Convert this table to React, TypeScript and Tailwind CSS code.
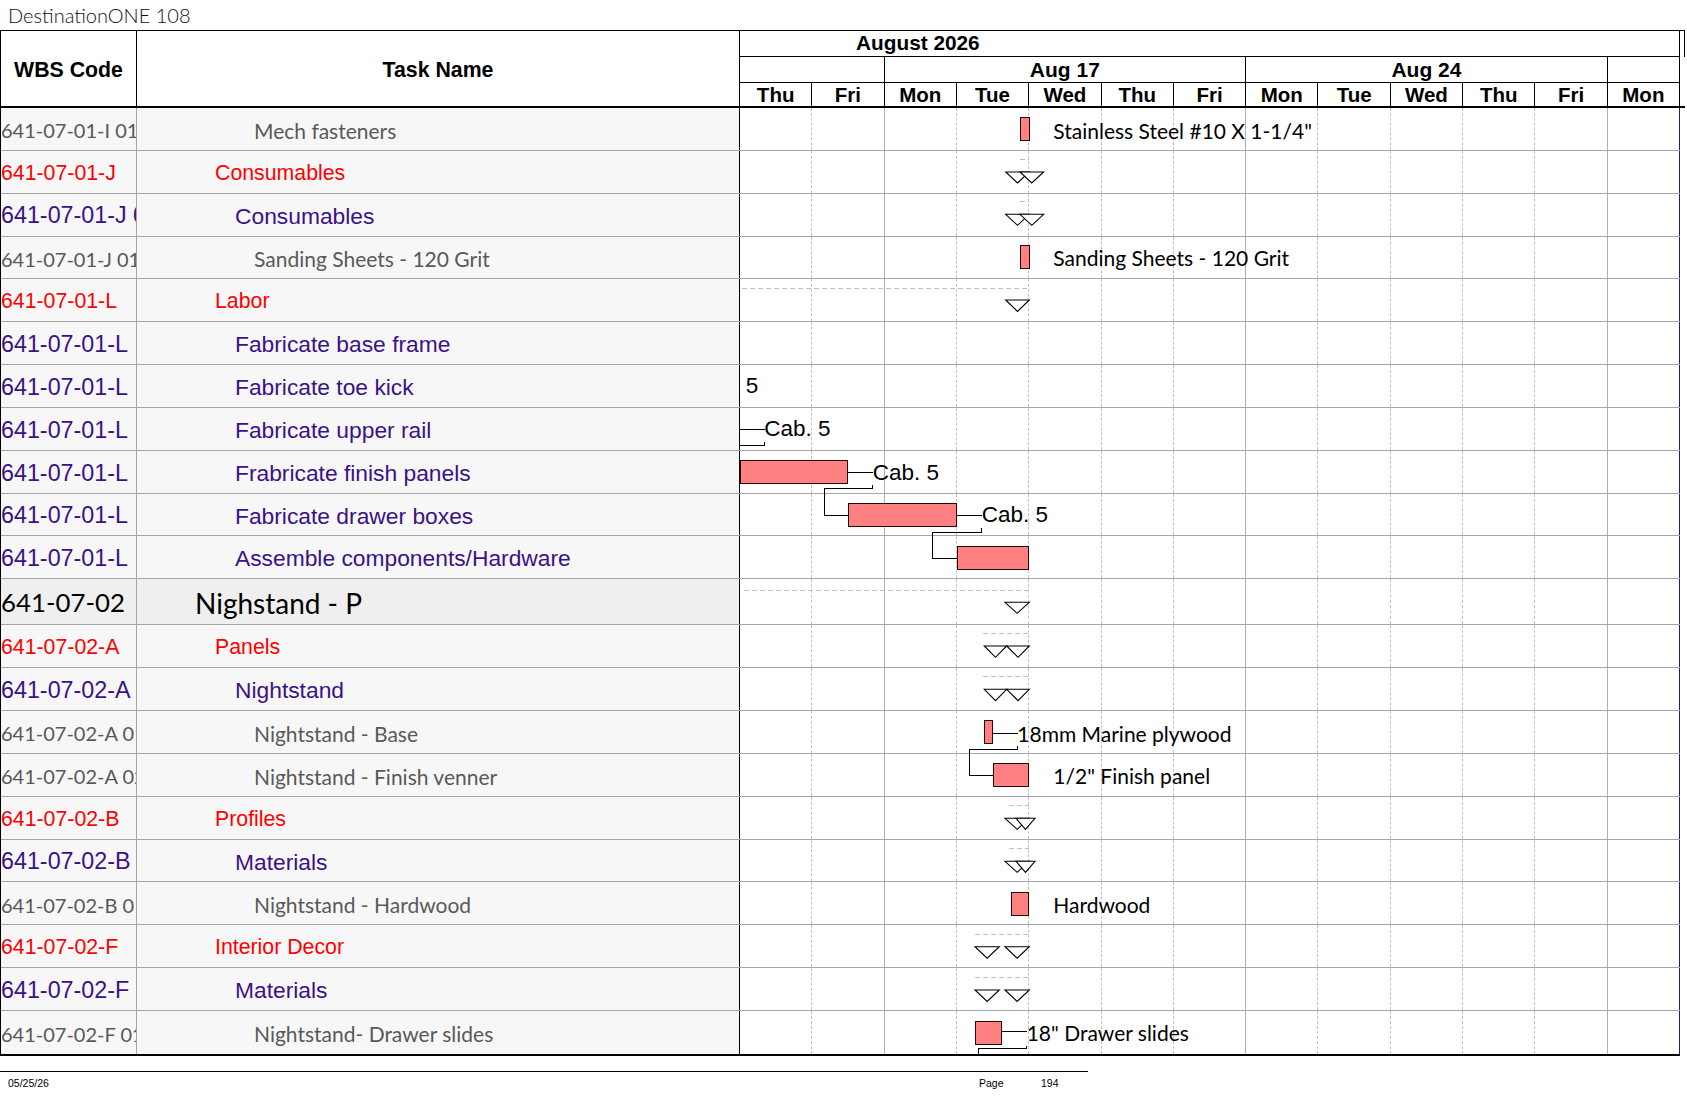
import React from "react";

type Kind = "gray" | "red" | "purple" | "big";
interface Row {
  wbs: string;
  name: string;
  kind: Kind;
}

const LATO = "font-['Lato','Noto_Sans',sans-serif]";
const ARIAL = "font-['Liberation_Sans',Arial,sans-serif]";

const rows: Row[] = [
  { wbs: "641-07-01-I 01", name: "Mech fasteners", kind: "gray" },
  { wbs: "641-07-01-J", name: "Consumables", kind: "red" },
  { wbs: "641-07-01-J 01", name: "Consumables", kind: "purple" },
  { wbs: "641-07-01-J 01", name: "Sanding Sheets - 120 Grit", kind: "gray" },
  { wbs: "641-07-01-L", name: "Labor", kind: "red" },
  { wbs: "641-07-01-L", name: "Fabricate base frame", kind: "purple" },
  { wbs: "641-07-01-L", name: "Fabricate toe kick", kind: "purple" },
  { wbs: "641-07-01-L", name: "Fabricate upper rail", kind: "purple" },
  { wbs: "641-07-01-L", name: "Frabricate finish panels", kind: "purple" },
  { wbs: "641-07-01-L", name: "Fabricate drawer boxes", kind: "purple" },
  { wbs: "641-07-01-L", name: "Assemble components/Hardware", kind: "purple" },
  { wbs: "641-07-02", name: "Nighstand - P", kind: "big" },
  { wbs: "641-07-02-A", name: "Panels", kind: "red" },
  { wbs: "641-07-02-A", name: "Nightstand", kind: "purple" },
  { wbs: "641-07-02-A 01", name: "Nightstand - Base", kind: "gray" },
  { wbs: "641-07-02-A 02", name: "Nightstand - Finish venner", kind: "gray" },
  { wbs: "641-07-02-B", name: "Profiles", kind: "red" },
  { wbs: "641-07-02-B", name: "Materials", kind: "purple" },
  { wbs: "641-07-02-B 01", name: "Nightstand - Hardwood", kind: "gray" },
  { wbs: "641-07-02-F", name: "Interior Decor", kind: "red" },
  { wbs: "641-07-02-F", name: "Materials", kind: "purple" },
  { wbs: "641-07-02-F 01", name: "Nightstand- Drawer slides", kind: "gray" },
];

const days = ["Thu", "Fri", "Mon", "Tue", "Wed", "Thu", "Fri", "Mon", "Tue", "Wed", "Thu", "Fri", "Mon"];

const wbsClass: Record<Kind, string> = {
  gray: `${LATO} text-[20px] text-[#595959]`,
  red: `${ARIAL} text-[21.3px] text-[#ff0000]`,
  purple: `${ARIAL} text-[23.3px] text-[#3a1288]`,
  big: `${LATO} text-[25.8px] text-black`,
};

const nameClass: Record<Kind, string> = {
  gray: `${LATO} text-[21px] text-[#595959] pl-[117px]`,
  red: `${ARIAL} text-[21.3px] text-[#ff0000] pl-[78px]`,
  purple: `${ARIAL} text-[22.8px] text-[#3a1288] pl-[98px]`,
  big: `${LATO} text-[28px] text-black pl-[58px]`,
};

function dayBorder(i: number): string {
  if (i === 12) return "border-r border-solid border-[#1c1c8c]";
  if (i === 1 || i === 6 || i === 11) return "border-r border-solid border-[#b0b0b0]";
  return "border-r border-dashed border-[#c2c2c2]";
}

interface Label {
  x: number;
  y: number;
  t: string;
  arial?: boolean;
}

const labels: Label[] = [
  { x: 313.3, y: 23, t: 'Stainless Steel #10 X 1-1/4"' },
  { x: 313.3, y: 149.5, t: "Sanding Sheets - 120 Grit" },
  { x: -48, y: 278.9, t: "Cab. 5", arial: true },
  { x: 24.3, y: 322.3, t: "Cab. 5", arial: true },
  { x: 132.7, y: 365.7, t: "Cab. 5", arial: true },
  { x: 241.7, y: 408.3, t: "Cab. 5", arial: true },
  { x: 277.3, y: 626.3, t: "18mm Marine plywood" },
  { x: 313.3, y: 668, t: '1/2" Finish panel' },
  { x: 313.3, y: 797.3, t: "Hardwood" },
  { x: 286.7, y: 924.7, t: '18" Drawer slides' },
];

const bars: [number, number, number, number][] = [
  [280.5, 10.5, 8.5, 23],
  [280.5, 138.5, 8.5, 23],
  [0.5, 353.5, 107, 23],
  [108.5, 396.5, 108, 23],
  [217.5, 439.5, 71, 23],
  [244.5, 613.5, 8, 23],
  [253.5, 656.5, 35, 23],
  [271.5, 785.5, 17, 23],
  [235.5, 914.5, 26, 23],
];

const tris: [number, number, number, number][] = [
  [265.7, 65, 23.6, 11],
  [280, 65, 23.6, 11],
  [265.7, 107.3, 23.6, 11],
  [280, 107.3, 23.6, 11],
  [265.7, 193, 23.6, 11.5],
  [265, 495.3, 24.3, 11],
  [244.3, 539, 22.4, 11.3],
  [266.7, 539, 22.6, 11.3],
  [244.3, 582.3, 22.4, 11.3],
  [266.7, 582.3, 22.6, 11.3],
  [265, 711.3, 24.3, 11],
  [276, 711.3, 19, 11],
  [265, 754.3, 24.3, 11],
  [276, 754.3, 19, 11],
  [235, 839.7, 24.3, 11.5],
  [265, 839.7, 24.3, 11.5],
  [235, 883, 24.3, 11.5],
  [265, 883, 24.3, 11.5],
];

const dashes: [number, number, number][] = [
  [280, 289, 52.5],
  [280, 289, 94.5],
  [2, 289, 181.5],
  [4, 289, 483.5],
  [243, 289, 526.5],
  [243, 289, 569.5],
  [269, 289, 698.5],
  [269, 289, 741.5],
  [235, 289, 827.5],
  [235, 289, 870.5],
];

const paths: string[] = [
  "M0 322.5 H24.5",
  "M24.5 334.5 V338.5 H0",
  "M107.5 365.5 H132.5",
  "M132.5 378 V381.5 H84.5 V408.5 H108.5",
  "M216.5 408.5 H241.5",
  "M241.5 421 V425.5 H192.5 V451.5 H217.5",
  "M252.5 626.5 H277.5",
  "M277.5 638.5 V642.5 H229.5 V668.5 H253.5",
  "M261.5 924.5 H286.5",
  "M286.5 939 V941.5 H238.5 V950",
];

function GanttOverlay() {
  return (
    <div className="absolute left-[739px] top-[-1px] w-[940px] h-[947px] overflow-hidden pointer-events-none">
      <svg width="940" height="947" className="absolute left-0 top-0">
        {dashes.map(([x1, x2, y], i) => (
          <line key={"d" + i} x1={x1} x2={x2} y1={y} y2={y} stroke="#bdbdbd" strokeWidth="1.5" strokeDasharray="5 3" shapeRendering="crispEdges" />
        ))}
        {paths.map((d, i) => (
          <path key={"p" + i} d={d} fill="none" stroke="#000" strokeWidth="1" shapeRendering="crispEdges" />
        ))}
        {bars.map(([x, y, w, h], i) => (
          <rect key={"b" + i} x={x} y={y} width={w} height={h} fill="#ff8080" stroke="#2a0606" strokeWidth="1" shapeRendering="crispEdges" />
        ))}
        {tris.map(([x, y, w, h], i) => (
          <polygon key={"t" + i} points={`${x},${y} ${x + w},${y} ${x + w / 2},${y + h}`} fill="#fff" stroke="#000" strokeWidth="1.1" />
        ))}
      </svg>
      {labels.map((l, i) => (
        <span
          key={"l" + i}
          className={`absolute whitespace-nowrap leading-none -translate-y-1/2 text-black ${l.arial ? `${ARIAL} text-[22.5px]` : `${LATO} text-[21px]`}`}
          style={{ left: l.x, top: l.y }}
        >
          {l.t}
        </span>
      ))}
    </div>
  );
}

function BodyRow({ row, last }: { row: Row; last: boolean }) {
  const big = row.kind === "big";
  return (
    <div className={`flex ${big ? "h-[46.1px]" : "h-[42.85px]"} ${last ? "" : "border-b border-[#a6a6a6]"}`}>
      <div className={`w-[136px] shrink-0 border-r border-[#a6a6a6] flex items-center pt-[3px] overflow-hidden whitespace-nowrap leading-none ${big ? "bg-[#efefef]" : "bg-[#f7f7f7]"} ${wbsClass[row.kind]}`}>
        {row.wbs}
      </div>
      <div className={`w-[603px] shrink-0 border-r border-black flex items-center pt-[3px] overflow-hidden whitespace-nowrap leading-none ${big ? "bg-[#efefef]" : "bg-[#f7f7f7]"} ${nameClass[row.kind]}`}>
        {row.name}
      </div>
      <div className="w-[940px] shrink-0 grid grid-cols-[repeat(13,minmax(0,1fr))] bg-white">
        {days.map((_, i) => (
          <div key={i} className={dayBorder(i)} />
        ))}
      </div>
    </div>
  );
}

export default function App() {
  return (
    <div className="w-[1687px] h-[1097px] bg-white overflow-hidden text-black">
      <div className={`h-[30px] flex items-center pl-[8px] ${LATO} font-light text-[20px] text-[#111] leading-none`}>
        DestinationONE 108
      </div>
      <div className="w-[1685px] border-t border-l border-black">
        {/* Header */}
        <div className={`flex h-[77px] border-b-2 border-black ${ARIAL} font-bold text-black leading-none`}>
          <div className="w-[136px] shrink-0 border-r border-black flex items-center justify-center pt-[4px] text-[21.3px]">WBS Code</div>
          <div className="w-[603px] shrink-0 border-r border-black flex items-center justify-center pt-[4px] text-[21.3px]">Task Name</div>
          <div className="w-[945px] shrink-0 flex flex-col">
            <div className="h-[26px] flex">
              <div className="w-[940px] border-r border-b border-black flex items-center pl-[116px] text-[20.8px]">August 2026</div>
              <div className="w-[5px] border-r border-black" />
            </div>
            <div className="h-[26px] w-[940px] grid grid-cols-[repeat(13,minmax(0,1fr))] border-b border-black text-[21px]">
              <div className="col-span-2 border-r border-black" />
              <div className="col-span-5 border-r border-black flex items-center justify-center">Aug 17</div>
              <div className="col-span-5 border-r border-black flex items-center justify-center">Aug 24</div>
              <div className="col-span-1 border-r border-black" />
            </div>
            <div className="h-[23px] w-[940px] grid grid-cols-[repeat(13,minmax(0,1fr))] text-[20.5px]">
              {days.map((d, i) => (
                <div key={i} className="border-r border-black flex items-center justify-center pt-[1px]">
                  {d}
                </div>
              ))}
            </div>
          </div>
        </div>
        {/* Body */}
        <div className="relative w-[1679px] border-b-2 border-black">
          {rows.map((r, i) => (
            <BodyRow key={i} row={r} last={i === rows.length - 1} />
          ))}
          <GanttOverlay />
        </div>
      </div>
      {/* Footer */}
      <div className={`mt-[15px] w-[1088px] border-t border-black flex pt-[6px] pl-[8px] ${ARIAL} text-[10.5px] leading-none text-black`}>
        <span className="w-[971px]">05/25/26</span>
        <span className="w-[62px]">Page</span>
        <span>194</span>
      </div>
    </div>
  );
}
